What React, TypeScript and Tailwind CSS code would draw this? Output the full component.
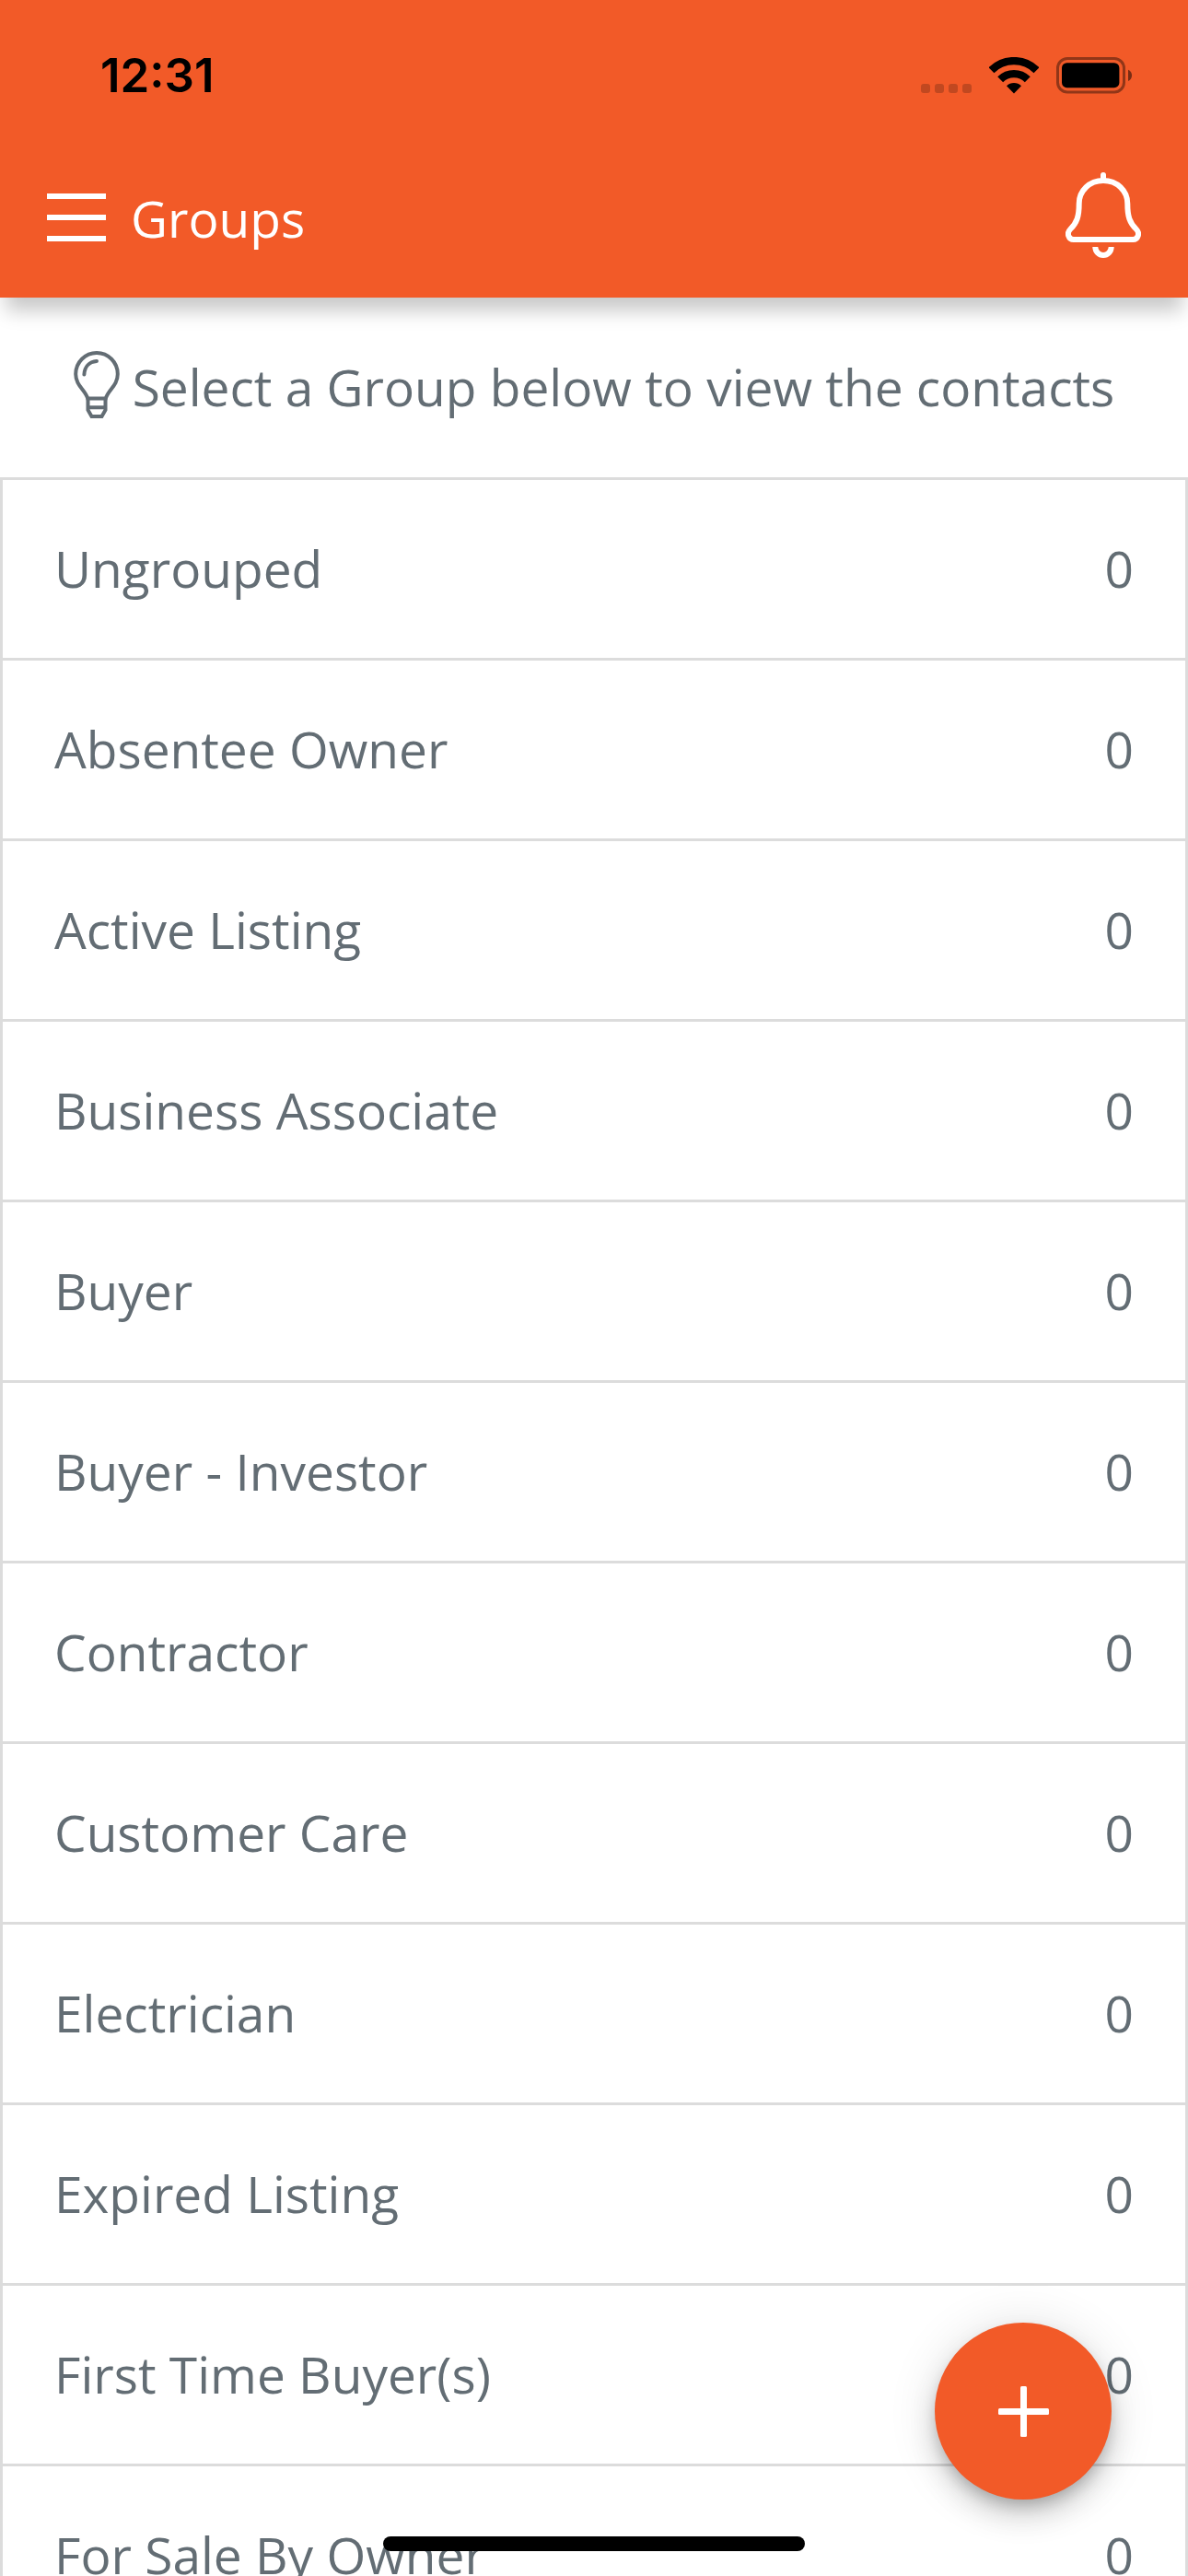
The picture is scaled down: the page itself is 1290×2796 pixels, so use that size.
interface Group {
  name: string;
  count: number;
}

const groups: Group[] = [
  { name: "Ungrouped", count: 0 },
  { name: "Absentee Owner", count: 0 },
  { name: "Active Listing", count: 0 },
  { name: "Business Associate", count: 0 },
  { name: "Buyer", count: 0 },
  { name: "Buyer - Investor", count: 0 },
  { name: "Contractor", count: 0 },
  { name: "Customer Care", count: 0 },
  { name: "Electrician", count: 0 },
  { name: "Expired Listing", count: 0 },
  { name: "First Time Buyer(s)", count: 0 },
  { name: "For Sale By Owner", count: 0 },
];

function WifiIcon() {
  return (
    <svg width="54" height="40" viewBox="0 0 54 40" fill="none">
      <path
        d="M2.5 14.2A34.8 34.8 0 0 1 51.5 14.2"
        stroke="black"
        strokeWidth="8.4"
      />
      <path
        d="M12.2 24.2A21 21 0 0 1 41.8 24.2"
        stroke="black"
        strokeWidth="8.4"
      />
      <path d="M27 39.5L19 31.2A11.7 11.7 0 0 1 35 31.2Z" fill="black" />
    </svg>
  );
}

function BatteryIcon() {
  return (
    <svg width="84" height="40" viewBox="0 0 84 40" fill="none">
      <rect
        x="1.5"
        y="1.5"
        width="72"
        height="36.5"
        rx="10.5"
        stroke="black"
        strokeOpacity="0.4"
        strokeWidth="3"
      />
      <rect x="6" y="6.2" width="62.4" height="27" rx="5.5" fill="black" />
      <path
        d="M78 13.8C83.4 16 83.4 23.8 78 26Z"
        fill="black"
        fillOpacity="0.5"
      />
    </svg>
  );
}

function MenuIcon() {
  return (
    <svg width="64" height="52" viewBox="0 0 64 52" fill="white">
      <rect width="64" height="6" />
      <rect y="23" width="64" height="6" />
      <rect y="46" width="64" height="6" />
    </svg>
  );
}

function BellIcon() {
  return (
    <svg
      width="82"
      height="94"
      viewBox="0 0 82 94"
      fill="none"
      stroke="white"
      strokeWidth="6"
    >
      <path d="M41 9V3" strokeLinecap="round" />
      <path d="M41 9C26 9 14.7 20 14.7 34C14.7 48 12.5 54.5 5 62C1 66 3.2 73 8.8 73H73.2C78.8 73 81 66 77 62C69.5 54.5 67.3 48 67.3 34C67.3 20 56 9 41 9Z" />
      <path d="M32.3 81A8.7 9 0 0 0 49.7 81" />
    </svg>
  );
}

function BulbIcon() {
  return (
    <svg
      width="50"
      height="73"
      viewBox="0 0 50 73"
      fill="none"
      stroke="#636d74"
      strokeWidth="4"
      className="shrink-0"
    >
      <path d="M15.3 51.6C12.5 42 2.2 37.5 2.2 25A22.8 23 0 0 1 47.8 25C47.8 37.5 37.5 42 34.7 51.6Z" />
      <path d="M15.5 51.6V64L19.5 71H30.5L34.5 64V51.6M15.5 61.3H34.5" />
      <path d="M11.4 25.5C11.8 17 17 11.6 25 11" strokeLinecap="round" />
    </svg>
  );
}

function PlusIcon() {
  return (
    <svg width="55" height="55" viewBox="0 0 55 55" fill="white">
      <rect x="24" width="7" height="55" rx="1.5" />
      <rect y="24" width="55" height="7" rx="1.5" />
    </svg>
  );
}

function StatusBar() {
  return (
    <div className="flex items-center justify-between pt-[47px] pr-[59px] pl-[109px]">
      <span className="font-['Inter',sans-serif] text-[51px] leading-[70px] font-semibold text-black">
        12:31
      </span>
      <div className="flex items-end gap-[19px]">
        <div className="flex gap-[5px] pb-px">
          {[0, 1, 2, 3].map((dot) => (
            <span key={dot} className="size-[10px] rounded-[3px] bg-black/20" />
          ))}
        </div>
        <WifiIcon />
        <BatteryIcon />
      </div>
    </div>
  );
}

function GroupRow({ name, count }: Group) {
  return (
    <li className="border-b-3 border-[#dcdcdc]">
      <button
        type="button"
        className="flex w-full items-center justify-between px-[56px] pt-[57px] pb-[59px] text-left leading-[77px]"
      >
        <span>{name}</span>
        <span>{count}</span>
      </button>
    </li>
  );
}

export default function App() {
  return (
    <div className="relative flex h-screen flex-col overflow-hidden bg-white font-['Open_Sans',sans-serif] text-[55px] text-[#636d74]">
      <header className="z-10 shrink-0 bg-[#f25a28] shadow-[0_20px_20px_-6px_rgba(0,0,0,0.22)]">
        <StatusBar />
        <div className="flex items-center justify-between px-[51px] pt-[70px] pb-[42px]">
          <div className="flex items-center gap-[27px] pt-1">
            <button type="button" aria-label="Menu">
              <MenuIcon />
            </button>
            <h1 className="leading-[77px] text-white">Groups</h1>
          </div>
          <button type="button" aria-label="Notifications">
            <BellIcon />
          </button>
        </div>
      </header>

      <main className="flex-1 overflow-y-auto [scrollbar-width:none]">
        <div className="flex items-start justify-center gap-[14px] pt-[58px] pb-[60px]">
          <BulbIcon />
          <p className="leading-[77px]">
            Select a Group below to view the contacts
          </p>
        </div>
        <ul className="border-x-3 border-t-3 border-[#dcdcdc]">
          {groups.map((group) => (
            <GroupRow key={group.name} name={group.name} count={group.count} />
          ))}
        </ul>
      </main>

      <button
        type="button"
        aria-label="Add group"
        className="absolute right-[83px] bottom-[83px] flex size-48 items-center justify-center rounded-full bg-[#f25a28] shadow-[0_9px_15px_-3px_rgba(0,0,0,0.2),0_18px_30px_0_rgba(0,0,0,0.14),0_3px_54px_0_rgba(0,0,0,0.12)]"
      >
        <PlusIcon />
      </button>

      {/* home indicator */}
      <div className="absolute bottom-[27px] left-1/2 h-4 w-[458px] -translate-x-1/2 rounded-full bg-black" />
    </div>
  );
}
